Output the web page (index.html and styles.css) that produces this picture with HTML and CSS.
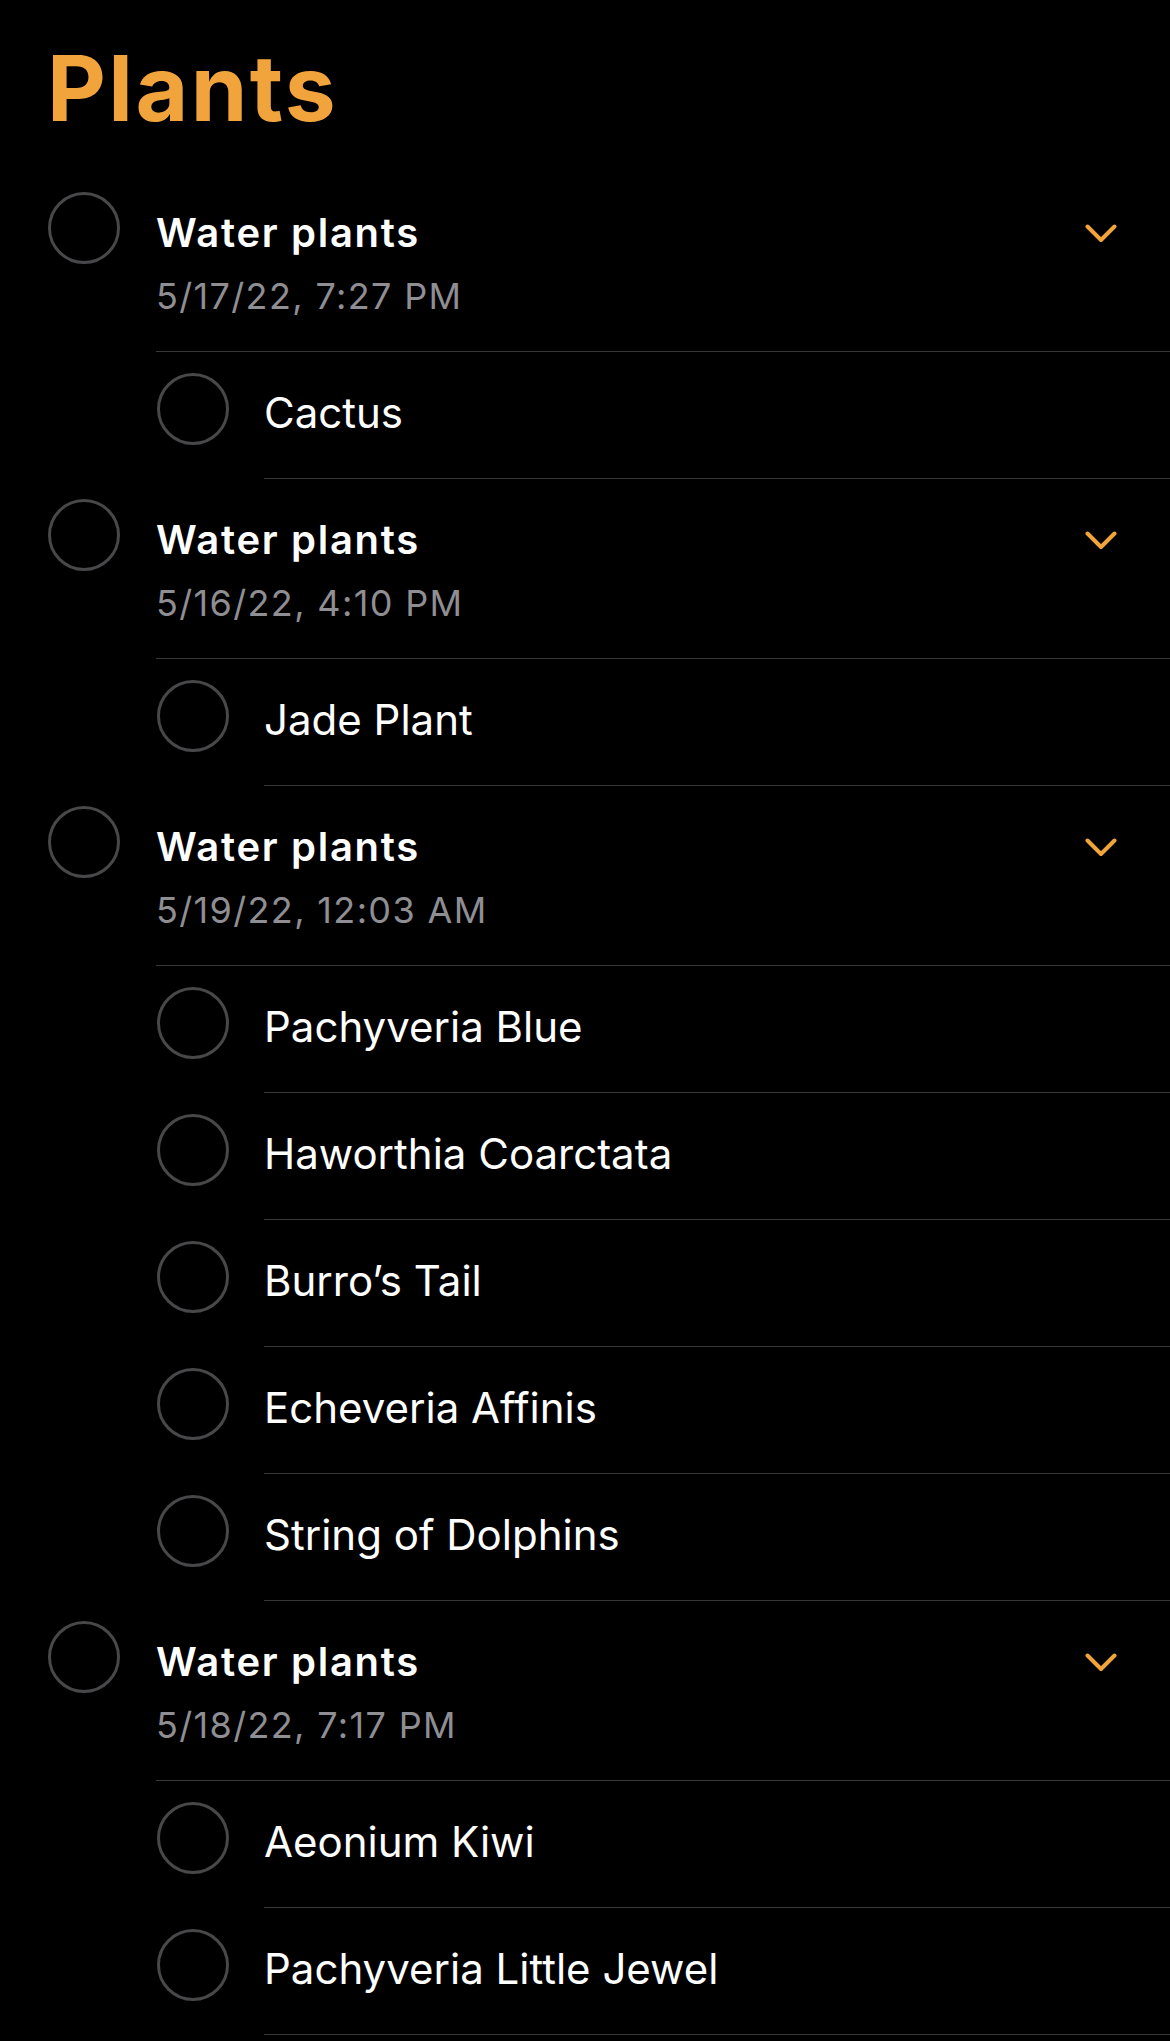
FILE: index.html
```html
<!DOCTYPE html>
<html lang="en">
<head>
<meta charset="utf-8">
<title>Plants</title>
<link rel="stylesheet" href="styles.css">
</head>
<body>
<main class="screen">
  <h1 class="title">Plants</h1>
  <ul class="list">
    <li class="row main-row">
      <span class="check"></span>
      <div class="body">
        <div class="text">
          <div class="task-name">Water plants</div>
          <div class="task-date">5/17/22, 7:27 PM</div>
        </div>
        <svg class="chevron" viewBox="0 0 32 20" width="32" height="20"><path d="M2.5 2.5 L16 16 L29.5 2.5"/></svg>
      </div>
    </li>
    <li class="row sub-row"><span class="check"></span><div class="body"><div class="sub-name">Cactus</div></div></li>

    <li class="row main-row">
      <span class="check"></span>
      <div class="body">
        <div class="text">
          <div class="task-name">Water plants</div>
          <div class="task-date">5/16/22, 4:10 PM</div>
        </div>
        <svg class="chevron" viewBox="0 0 32 20" width="32" height="20"><path d="M2.5 2.5 L16 16 L29.5 2.5"/></svg>
      </div>
    </li>
    <li class="row sub-row"><span class="check"></span><div class="body"><div class="sub-name">Jade Plant</div></div></li>

    <li class="row main-row">
      <span class="check"></span>
      <div class="body">
        <div class="text">
          <div class="task-name">Water plants</div>
          <div class="task-date">5/19/22, 12:03 AM</div>
        </div>
        <svg class="chevron" viewBox="0 0 32 20" width="32" height="20"><path d="M2.5 2.5 L16 16 L29.5 2.5"/></svg>
      </div>
    </li>
    <li class="row sub-row"><span class="check"></span><div class="body"><div class="sub-name">Pachyveria Blue</div></div></li>
    <li class="row sub-row"><span class="check"></span><div class="body"><div class="sub-name">Haworthia Coarctata</div></div></li>
    <li class="row sub-row"><span class="check"></span><div class="body"><div class="sub-name">Burro’s Tail</div></div></li>
    <li class="row sub-row"><span class="check"></span><div class="body"><div class="sub-name">Echeveria Affinis</div></div></li>
    <li class="row sub-row"><span class="check"></span><div class="body"><div class="sub-name">String of Dolphins</div></div></li>

    <li class="row main-row">
      <span class="check"></span>
      <div class="body">
        <div class="text">
          <div class="task-name">Water plants</div>
          <div class="task-date">5/18/22, 7:17 PM</div>
        </div>
        <svg class="chevron" viewBox="0 0 32 20" width="32" height="20"><path d="M2.5 2.5 L16 16 L29.5 2.5"/></svg>
      </div>
    </li>
    <li class="row sub-row"><span class="check"></span><div class="body"><div class="sub-name">Aeonium Kiwi</div></div></li>
    <li class="row sub-row"><span class="check"></span><div class="body"><div class="sub-name">Pachyveria Little Jewel</div></div></li>
  </ul>
</main>
</body>
</html>
```

FILE: styles.css
```css
html, body {
  margin: 0;
  padding: 0;
  background: #000;
}

body {
  font-family: Inter, "Noto Sans", "Liberation Sans", sans-serif;
  color: #fff;
  overflow: hidden;
}

.screen {
  width: 1170px;
}

.title {
  margin: 33px 0 29px;
  padding-left: 47px;
  font-size: 91px;
  line-height: 110px;
  font-weight: 700;
  color: #f1a43c;
  letter-spacing: 2.4px;
}

.list {
  list-style: none;
  margin: 0;
  padding: 0;
}

.row {
  display: flex;
  align-items: flex-start;
}

.check {
  flex: none;
  box-sizing: border-box;
  width: 72px;
  height: 72px;
  border: 3.5px solid #48484a;
  border-radius: 50%;
}

.main-row .check {
  margin: 20px 36px 0 48px;
}

.sub-row .check {
  margin: 21px 35px 0 157px;
}

.body {
  flex: 1;
  display: flex;
  align-items: flex-start;
  border-bottom: 1px solid #38383a;
}

.main-row .body {
  height: 179px;
}

.sub-row .body {
  height: 126px;
}

.text {
  flex: 1;
  padding-top: 37px;
}

.task-name {
  font-size: 40px;
  line-height: 48px;
  font-weight: 600;
  letter-spacing: 1.7px;
}

.task-date {
  margin-top: 17px;
  font-size: 36px;
  line-height: 44px;
  color: #8e8e93;
  letter-spacing: 1.35px;
}

.sub-name {
  padding-top: 36px;
  font-size: 42px;
  line-height: 50px;
}

.chevron {
  flex: none;
  margin: 52px 53px 0 0;
  fill: none;
  stroke: #f1a43c;
  stroke-width: 4;
  stroke-linecap: round;
  stroke-linejoin: round;
}
```
